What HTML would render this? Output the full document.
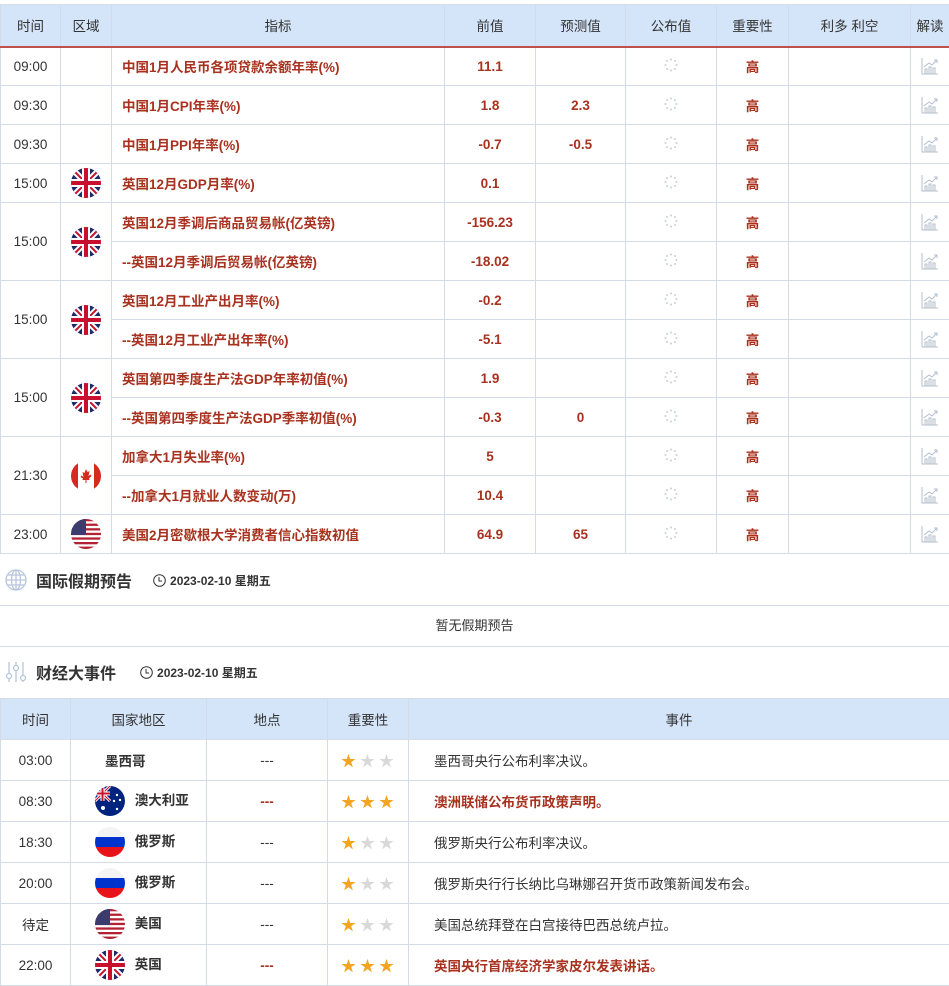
<!DOCTYPE html>
<html><head><meta charset="utf-8"><style>
*{margin:0;padding:0;box-sizing:border-box}
body{width:949px;height:986px;background:#fff;font-family:"Liberation Sans","Noto Sans CJK SC",sans-serif;font-size:13.5px;color:#333;position:relative;overflow:hidden}
table{border-collapse:collapse;table-layout:fixed;position:absolute;left:0}
td,th{border:1px solid #d3dbe6;text-align:center;vertical-align:middle;padding:0}
th{background:#d4e4f9;font-weight:normal;color:#333;font-size:13.5px}
#t1{top:4px;width:949px}
#t1 th{height:42px;border-bottom:2px solid #c0504d}
#t1 td{height:39px}
.r{color:#a8321f;font-weight:bold}
.ind{text-align:left;padding-left:10px}
.fl{width:30px;height:30px;display:inline-block;vertical-align:middle}
.spin{width:14px;height:14px;display:inline-block}
.ic{width:18px;height:18px;display:inline-block;vertical-align:middle}
.sec{position:absolute;left:0;width:949px}
.title{font-size:16px;font-weight:bold;color:#333}
.date{font-size:12px;font-weight:bold;color:#333}
#t2{top:698px;width:949px}
#t2 th{height:41px}
#t2 td{height:41px}
.st{color:#f3a521;font-size:15px;letter-spacing:4px;padding-left:3px}
.sg{color:#d9d9d9}
.ev{text-align:left;padding-left:25px}
.cn{text-align:left;padding-left:24px}
</style></head><body>
<svg width="0" height="0" style="position:absolute">
<defs>
<clipPath id="c"><circle cx="15" cy="15" r="15"/></clipPath>
<symbol id="uk" viewBox="0 0 30 30"><g clip-path="url(#c)"><rect width="30" height="30" fill="#1f2a6b"/><path d="M0 0L30 30M30 0L0 30" stroke="#fff" stroke-width="6"/><path d="M0 0L30 30M30 0L0 30" stroke="#c8102e" stroke-width="2"/><path d="M15 0V30M0 15H30" stroke="#fff" stroke-width="8"/><path d="M15 0V30M0 15H30" stroke="#c8102e" stroke-width="4"/></g></symbol>
<symbol id="us" viewBox="0 0 30 30"><g clip-path="url(#c)"><rect width="30" height="30" fill="#fff"/><g fill="#b22234"><rect y="0" width="30" height="2.3"/><rect y="4.6" width="30" height="2.3"/><rect y="9.2" width="30" height="2.3"/><rect y="13.8" width="30" height="2.3"/><rect y="18.4" width="30" height="2.3"/><rect y="23" width="30" height="2.3"/><rect y="27.6" width="30" height="2.4"/></g><rect width="15" height="16" fill="#3c3b6e"/></g></symbol>
<symbol id="ca" viewBox="0 0 30 30"><g clip-path="url(#c)"><rect width="30" height="30" fill="#fff"/><rect width="7" height="30" fill="#d52b1e"/><rect x="23" width="7" height="30" fill="#d52b1e"/><path d="M15 8l1.5 3 2-1-1 5 2-1.5 1 1.5-2.5 2.5 .5 1.5h-3v3h-1v-3h-3l.5-1.5L9.5 16l1-1.5 2 1.5-1-5 2 1z" fill="#d52b1e"/></g></symbol>
<symbol id="au" viewBox="0 0 30 30"><g clip-path="url(#c)"><rect width="30" height="30" fill="#00247d"/><g transform="scale(.5)"><path d="M0 0L30 30M30 0L0 30" stroke="#fff" stroke-width="6"/><path d="M0 0L30 30M30 0L0 30" stroke="#c8102e" stroke-width="2"/><path d="M15 0V30M0 15H30" stroke="#fff" stroke-width="8"/><path d="M15 0V30M0 15H30" stroke="#c8102e" stroke-width="4"/></g><g fill="#fff"><circle cx="8" cy="22" r="2"/><circle cx="22" cy="9" r="1.2"/><circle cx="19" cy="15" r="1.2"/><circle cx="25" cy="14" r="1.2"/><circle cx="22" cy="23" r="1.2"/></g></g></symbol>
<symbol id="ru" viewBox="0 0 30 30"><g clip-path="url(#c)"><rect width="30" height="10" fill="#f4f4f4"/><rect y="10" width="30" height="10" fill="#0033cc"/><rect y="20" width="30" height="10" fill="#e8121a"/></g></symbol>
<symbol id="sp" viewBox="0 0 14 14"><g fill="#c8d0da"><circle cx="7" cy="1.5" r="1"/><circle cx="11" cy="3" r="1"/><circle cx="12.5" cy="7" r="1"/><circle cx="11" cy="11" r="1"/><circle cx="7" cy="12.5" r="1"/><circle cx="3" cy="11" r="1"/><circle cx="1.5" cy="7" r="1"/><circle cx="3" cy="3" r="1"/></g></symbol>
<symbol id="ch" viewBox="0 0 18 18"><g fill="none" stroke="#b4bfcc" stroke-width="1"><path d="M1 1V17H17"/><rect x="4" y="12" width="2" height="5"/><rect x="8" y="10" width="2" height="7"/><rect x="12" y="11" width="2" height="6"/><path d="M3 10L8 6L11 8L16 3M13 3H16V6"/></g></symbol>
</defs></svg>

<table id="t1">
<colgroup><col style="width:60px"><col style="width:51px"><col style="width:333px"><col style="width:91px"><col style="width:90px"><col style="width:91px"><col style="width:72px"><col style="width:122px"><col style="width:39px"></colgroup>
<tr><th>时间</th><th>区域</th><th>指标</th><th>前值</th><th>预测值</th><th>公布值</th><th>重要性</th><th>利多 利空</th><th>解读</th></tr>
<tr><td>09:00</td><td></td><td class="ind r">中国1月人民币各项贷款余额年率(%)</td><td class="r">11.1</td><td></td><td><svg class="spin"><use href="#sp"/></svg></td><td class="r">高</td><td></td><td><svg class="ic"><use href="#ch"/></svg></td></tr>
<tr><td>09:30</td><td></td><td class="ind r">中国1月CPI年率(%)</td><td class="r">1.8</td><td class="r">2.3</td><td><svg class="spin"><use href="#sp"/></svg></td><td class="r">高</td><td></td><td><svg class="ic"><use href="#ch"/></svg></td></tr>
<tr><td>09:30</td><td></td><td class="ind r">中国1月PPI年率(%)</td><td class="r">-0.7</td><td class="r">-0.5</td><td><svg class="spin"><use href="#sp"/></svg></td><td class="r">高</td><td></td><td><svg class="ic"><use href="#ch"/></svg></td></tr>
<tr><td>15:00</td><td><svg class="fl"><use href="#uk"/></svg></td><td class="ind r">英国12月GDP月率(%)</td><td class="r">0.1</td><td></td><td><svg class="spin"><use href="#sp"/></svg></td><td class="r">高</td><td></td><td><svg class="ic"><use href="#ch"/></svg></td></tr>
<tr><td rowspan="2">15:00</td><td rowspan="2"><svg class="fl"><use href="#uk"/></svg></td><td class="ind r">英国12月季调后商品贸易帐(亿英镑)</td><td class="r">-156.23</td><td></td><td><svg class="spin"><use href="#sp"/></svg></td><td class="r">高</td><td></td><td><svg class="ic"><use href="#ch"/></svg></td></tr>
<tr><td class="ind r">--英国12月季调后贸易帐(亿英镑)</td><td class="r">-18.02</td><td></td><td><svg class="spin"><use href="#sp"/></svg></td><td class="r">高</td><td></td><td><svg class="ic"><use href="#ch"/></svg></td></tr>
<tr><td rowspan="2">15:00</td><td rowspan="2"><svg class="fl"><use href="#uk"/></svg></td><td class="ind r">英国12月工业产出月率(%)</td><td class="r">-0.2</td><td></td><td><svg class="spin"><use href="#sp"/></svg></td><td class="r">高</td><td></td><td><svg class="ic"><use href="#ch"/></svg></td></tr>
<tr><td class="ind r">--英国12月工业产出年率(%)</td><td class="r">-5.1</td><td></td><td><svg class="spin"><use href="#sp"/></svg></td><td class="r">高</td><td></td><td><svg class="ic"><use href="#ch"/></svg></td></tr>
<tr><td rowspan="2">15:00</td><td rowspan="2"><svg class="fl"><use href="#uk"/></svg></td><td class="ind r">英国第四季度生产法GDP年率初值(%)</td><td class="r">1.9</td><td></td><td><svg class="spin"><use href="#sp"/></svg></td><td class="r">高</td><td></td><td><svg class="ic"><use href="#ch"/></svg></td></tr>
<tr><td class="ind r">--英国第四季度生产法GDP季率初值(%)</td><td class="r">-0.3</td><td class="r">0</td><td><svg class="spin"><use href="#sp"/></svg></td><td class="r">高</td><td></td><td><svg class="ic"><use href="#ch"/></svg></td></tr>
<tr><td rowspan="2">21:30</td><td rowspan="2"><svg class="fl"><use href="#ca"/></svg></td><td class="ind r">加拿大1月失业率(%)</td><td class="r">5</td><td></td><td><svg class="spin"><use href="#sp"/></svg></td><td class="r">高</td><td></td><td><svg class="ic"><use href="#ch"/></svg></td></tr>
<tr><td class="ind r">--加拿大1月就业人数变动(万)</td><td class="r">10.4</td><td></td><td><svg class="spin"><use href="#sp"/></svg></td><td class="r">高</td><td></td><td><svg class="ic"><use href="#ch"/></svg></td></tr>
<tr><td>23:00</td><td><svg class="fl"><use href="#us"/></svg></td><td class="ind r">美国2月密歇根大学消费者信心指数初值</td><td class="r">64.9</td><td class="r">65</td><td><svg class="spin"><use href="#sp"/></svg></td><td class="r">高</td><td></td><td><svg class="ic"><use href="#ch"/></svg></td></tr>
</table>

<div class="sec" style="top:566px;height:28px;display:flex;align-items:center">
<svg width="22" height="22" viewBox="0 0 22 22" style="margin-left:5px"><g fill="none" stroke="#b8c6dc" stroke-width="1.3"><circle cx="11" cy="11" r="10"/><ellipse cx="11" cy="11" rx="4.5" ry="10"/><path d="M1 11H21M3 6H19M3 16H19M11 1V21"/></g></svg>
<span class="title" style="margin-left:9px">国际假期预告</span>
<svg width="13" height="13" viewBox="0 0 13 13" style="margin-left:21px"><circle cx="6.5" cy="6.5" r="5.8" fill="none" stroke="#333" stroke-width="1"/><path d="M6 3V7H9" fill="none" stroke="#333"/></svg>
<span class="date" style="margin-left:4px">2023-02-10 星期五</span>
</div>
<div class="sec" style="top:605px;height:42px;border-top:1px solid #d3dbe6;border-bottom:1px solid #d3dbe6;text-align:center;line-height:40px;font-size:13px">暂无假期预告</div>
<div class="sec" style="top:658px;height:28px;display:flex;align-items:center">
<svg width="22" height="22" viewBox="0 0 22 22" style="margin-left:5px"><g fill="none" stroke="#b8c6dc" stroke-width="1.3"><path d="M4 1V21M11 1V21M18 1V21"/><circle cx="4" cy="15" r="2.5" fill="#fff"/><circle cx="11" cy="7" r="2.5" fill="#fff"/><circle cx="18" cy="17" r="2.5" fill="#fff"/></g></svg>
<span class="title" style="margin-left:9px">财经大事件</span>
<svg width="13" height="13" viewBox="0 0 13 13" style="margin-left:24px"><circle cx="6.5" cy="6.5" r="5.8" fill="none" stroke="#333" stroke-width="1"/><path d="M6 3V7H9" fill="none" stroke="#333"/></svg>
<span class="date" style="margin-left:4px">2023-02-10 星期五</span>
</div>

<table id="t2">
<colgroup><col style="width:70px"><col style="width:136px"><col style="width:121px"><col style="width:81px"><col style="width:541px"></colgroup>
<tr><th>时间</th><th>国家地区</th><th>地点</th><th>重要性</th><th>事件</th></tr>
<tr><td>03:00</td><td class="cn" style="padding-left:34px;font-weight:bold">墨西哥</td><td>---</td><td class="st">★<span class="sg">★★</span></td><td class="ev">墨西哥央行公布利率决议。</td></tr>
<tr><td>08:30</td><td class="cn"><svg class="fl"><use href="#au"/></svg> <b style="margin-left:6px">澳大利亚</b></td><td class="r">---</td><td class="st">★★★</td><td class="ev r">澳洲联储公布货币政策声明。</td></tr>
<tr><td>18:30</td><td class="cn"><svg class="fl"><use href="#ru"/></svg> <b style="margin-left:6px">俄罗斯</b></td><td>---</td><td class="st">★<span class="sg">★★</span></td><td class="ev">俄罗斯央行公布利率决议。</td></tr>
<tr><td>20:00</td><td class="cn"><svg class="fl"><use href="#ru"/></svg> <b style="margin-left:6px">俄罗斯</b></td><td>---</td><td class="st">★<span class="sg">★★</span></td><td class="ev">俄罗斯央行行长纳比乌琳娜召开货币政策新闻发布会。</td></tr>
<tr><td>待定</td><td class="cn"><svg class="fl"><use href="#us"/></svg> <b style="margin-left:6px">美国</b></td><td>---</td><td class="st">★<span class="sg">★★</span></td><td class="ev">美国总统拜登在白宫接待巴西总统卢拉。</td></tr>
<tr><td>22:00</td><td class="cn"><svg class="fl"><use href="#uk"/></svg> <b style="margin-left:6px">英国</b></td><td class="r">---</td><td class="st">★★★</td><td class="ev r">英国央行首席经济学家皮尔发表讲话。</td></tr>
</table>
</body></html>
